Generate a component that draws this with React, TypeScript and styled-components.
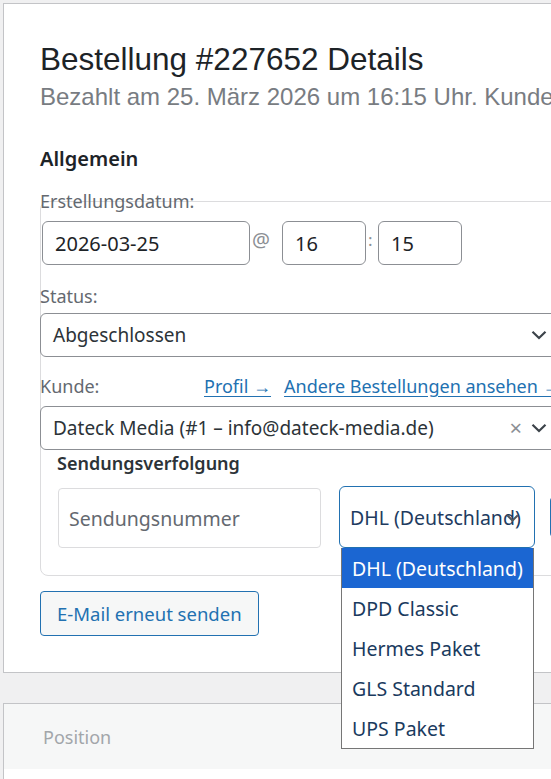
import styled, { createGlobalStyle } from 'styled-components';

const GlobalStyle = createGlobalStyle`
  html, body {
    margin: 0;
    padding: 0;
    background: #f0f0f1;
    overflow: hidden;
  }
  body {
    font-family: "Noto Sans", "Open Sans", sans-serif;
    color: #2c3338;
  }
`;

const Page = styled.div`
  padding: 3px 0 0 3px;
  width: 760px;
`;

const Panel = styled.section`
  background: #fff;
  border: 1px solid #c3c4c7;
  border-right: none;
  padding: 35px 0 36px 36px;
`;

const Title = styled.h1`
  font-family: "Liberation Sans", Arial, sans-serif;
  font-weight: 400;
  font-size: 31.5px;
  line-height: 40px;
  margin: 0 0 2px;
  color: #1d2327;
`;

const Subtitle = styled.p`
  font-family: "Liberation Sans", Arial, sans-serif;
  font-size: 24px;
  line-height: 32px;
  margin: 0 0 33px;
  color: #787c82;
  white-space: nowrap;
`;

const SectionTitle = styled.h3`
  font-size: 20px;
  font-weight: 600;
  line-height: 26px;
  margin: 0 0 29px;
  color: #1d2327;
`;

const Frame = styled.div`
  border: 1px solid #dcdcde;
  border-radius: 8px;
  width: 600px;
  padding-bottom: 27px;
`;

const Label = styled.div<{ $top: number; $bottom: number }>`
  font-size: 18px;
  line-height: 24px;
  color: #646970;
  margin: ${(p) => `${p.$top}px 0 ${p.$bottom}px -1px`};
  display: grid;
  grid-template-columns: 164px auto;
  white-space: nowrap;
`;

const DateRow = styled.div`
  display: flex;
  align-items: flex-start;
  margin: 0 0 19px 1px;
`;

const TextBox = styled.div<{ $w: number }>`
  width: ${(p) => p.$w}px;
  height: 44px;
  box-sizing: border-box;
  border: 1px solid #8c8f94;
  border-radius: 6px;
  padding: 0 12px;
  display: flex;
  align-items: center;
  font-size: 20px;
  color: #1d2327;
`;

const Sep = styled.span<{ $w: number; $size: number }>`
  width: ${(p) => p.$w}px;
  box-sizing: border-box;
  padding: 8px 0 0 2px;
  font-size: ${(p) => p.$size}px;
  line-height: 22px;
  color: #8c8f94;
`;

const Select = styled.div`
  width: 521px;
  margin-left: -1px;
  height: 44px;
  box-sizing: border-box;
  border: 1px solid #8c8f94;
  border-radius: 6px;
  padding: 0 13px 0 12px;
  display: flex;
  align-items: center;
  gap: 9px;
  font-size: 19px;
  color: #2c3338;
`;

const SelectText = styled.span`
  flex: 1;
  white-space: nowrap;
`;

const Clear = styled.span`
  color: #8c8f94;
  font-size: 22px;
  line-height: 1;
  margin-top: -2px;
`;

const Links = styled.span`
  display: flex;
  gap: 13px;
`;

const Link = styled.a`
  color: #2271b1;
  text-decoration: underline;
  text-underline-offset: 3px;
  font-size: 18px;
`;

const Tracking = styled.div`
  margin: 1px 0 0 16px;
`;

const TrackingTitle = styled.div`
  font-size: 18px;
  font-weight: 600;
  line-height: 24px;
  color: #2c3338;
  margin-bottom: 11px;
`;

const TrackingRow = styled.div`
  display: flex;
  gap: 18px;
  align-items: flex-start;
`;

const TrackingInput = styled.div`
  width: 263px;
  height: 60px;
  margin: 2px 0 0 1px;
  box-sizing: border-box;
  border: 1px solid #dcdcde;
  border-radius: 4px;
  padding: 0 10px;
  display: flex;
  align-items: center;
  font-size: 19.5px;
  color: #646970;
`;

const CarrierWrap = styled.div`
  position: relative;
`;

const CarrierSelect = styled.div`
  width: 196px;
  height: 62px;
  box-sizing: border-box;
  border: 1px solid #2271b1;
  border-radius: 6px;
  padding: 0 10px;
  display: flex;
  align-items: center;
  font-size: 19.5px;
  color: #1e3b5f;
  white-space: nowrap;
  position: relative;
`;

const CarrierChevron = styled.svg`
  position: absolute;
  right: 15px;
  top: 27px;
`;

const Options = styled.ul`
  position: absolute;
  top: 62px;
  left: 2px;
  width: 193px;
  box-sizing: border-box;
  margin: 0;
  padding: 0;
  list-style: none;
  background: #fff;
  border: 1px solid #767676;
  border-top: none;
  z-index: 2;
`;

const Option = styled.li<{ $active?: boolean }>`
  height: 40px;
  display: flex;
  align-items: center;
  padding: 0 10px;
  font-size: 19.5px;
  white-space: nowrap;
  background: ${(p) => (p.$active ? '#1b66d2' : '#fff')};
  color: ${(p) => (p.$active ? '#fff' : '#1a3a5e')};
`;

const SideButton = styled.div`
  flex: none;
  width: 30px;
  height: 40px;
  margin: 11px 0 0 -3px;
  box-sizing: border-box;
  border: 2px solid #2271b1;
  border-radius: 4px;
  background: #f6f7f7;
`;

const ResendButton = styled.button`
  display: block;
  margin-top: 15px;
  height: 45px;
  padding: 0 16px;
  font-family: inherit;
  font-size: 18.5px;
  color: #2271b1;
  background: #f6f7f7;
  border: 1px solid #2271b1;
  border-radius: 4px;
`;

const ItemsPanel = styled.section`
  margin-top: 30px;
  border: 1px solid #c3c4c7;
  border-right: none;
  border-bottom: none;
  background: #fff;
  height: 80px;
`;

const ItemsHeader = styled.div`
  background: #f6f7f7;
  height: 65px;
  padding-left: 39px;
  display: flex;
  align-items: center;
  font-size: 18px;
  color: #a2a6aa;
`;

const Chevron = () => (
  <svg width="16" height="10" viewBox="0 0 16 10" fill="none">
    <path d="M1.5 1.8l6.5 6.2 6.5-6.2" stroke="#3c434a" strokeWidth="2.2" />
  </svg>
);

const carriers = ['DHL (Deutschland)', 'DPD Classic', 'Hermes Paket', 'GLS Standard', 'UPS Paket'];

export default function App() {
  return (
    <>
      <GlobalStyle />
      <Page>
        <Panel>
          <Title>Bestellung #227652 Details</Title>
          <Subtitle>Bezahlt am 25. März 2026 um 16:15 Uhr. Kunden-IP: 127.0.0.1</Subtitle>
          <SectionTitle>Allgemein</SectionTitle>
          <Frame>
            <Label $top={-13} $bottom={8}>Erstellungsdatum:</Label>
            <DateRow>
              <TextBox $w={208}>2026-03-25</TextBox>
              <Sep $w={32} $size={20}>@</Sep>
              <TextBox $w={84}>16</TextBox>
              <Sep $w={12} $size={17}>:</Sep>
              <TextBox $w={84}>15</TextBox>
            </DateRow>
            <Label $top={0} $bottom={5}>Status:</Label>
            <Select>
              <SelectText>Abgeschlossen</SelectText>
              <Chevron />
            </Select>
            <Label $top={17} $bottom={8}>
              Kunde:
              <Links>
                <Link href="#">Profil →</Link>
                <Link href="#">Andere Bestellungen ansehen →</Link>
              </Links>
            </Label>
            <Select>
              <SelectText>Dateck Media (#1 – info@dateck-media.de)</SelectText>
              <Clear>×</Clear>
              <Chevron />
            </Select>
            <Tracking>
              <TrackingTitle>Sendungsverfolgung</TrackingTitle>
              <TrackingRow>
                <TrackingInput>Sendungsnummer</TrackingInput>
                <CarrierWrap>
                  <CarrierSelect>
                    DHL (Deutschland)
                    <CarrierChevron width="13" height="8" viewBox="0 0 13 8" fill="none">
                      <path d="M1.2 1.2l5.3 5.3 5.3-5.3" stroke="#50575e" strokeWidth="2" />
                    </CarrierChevron>
                  </CarrierSelect>
                  <Options>
                    {carriers.map((c, i) => (
                      <Option key={c} $active={i === 0}>
                        {c}
                      </Option>
                    ))}
                  </Options>
                </CarrierWrap>
                <SideButton />
              </TrackingRow>
            </Tracking>
          </Frame>
          <ResendButton>E-Mail erneut senden</ResendButton>
        </Panel>
        <ItemsPanel>
          <ItemsHeader>Position</ItemsHeader>
        </ItemsPanel>
      </Page>
    </>
  );
}
